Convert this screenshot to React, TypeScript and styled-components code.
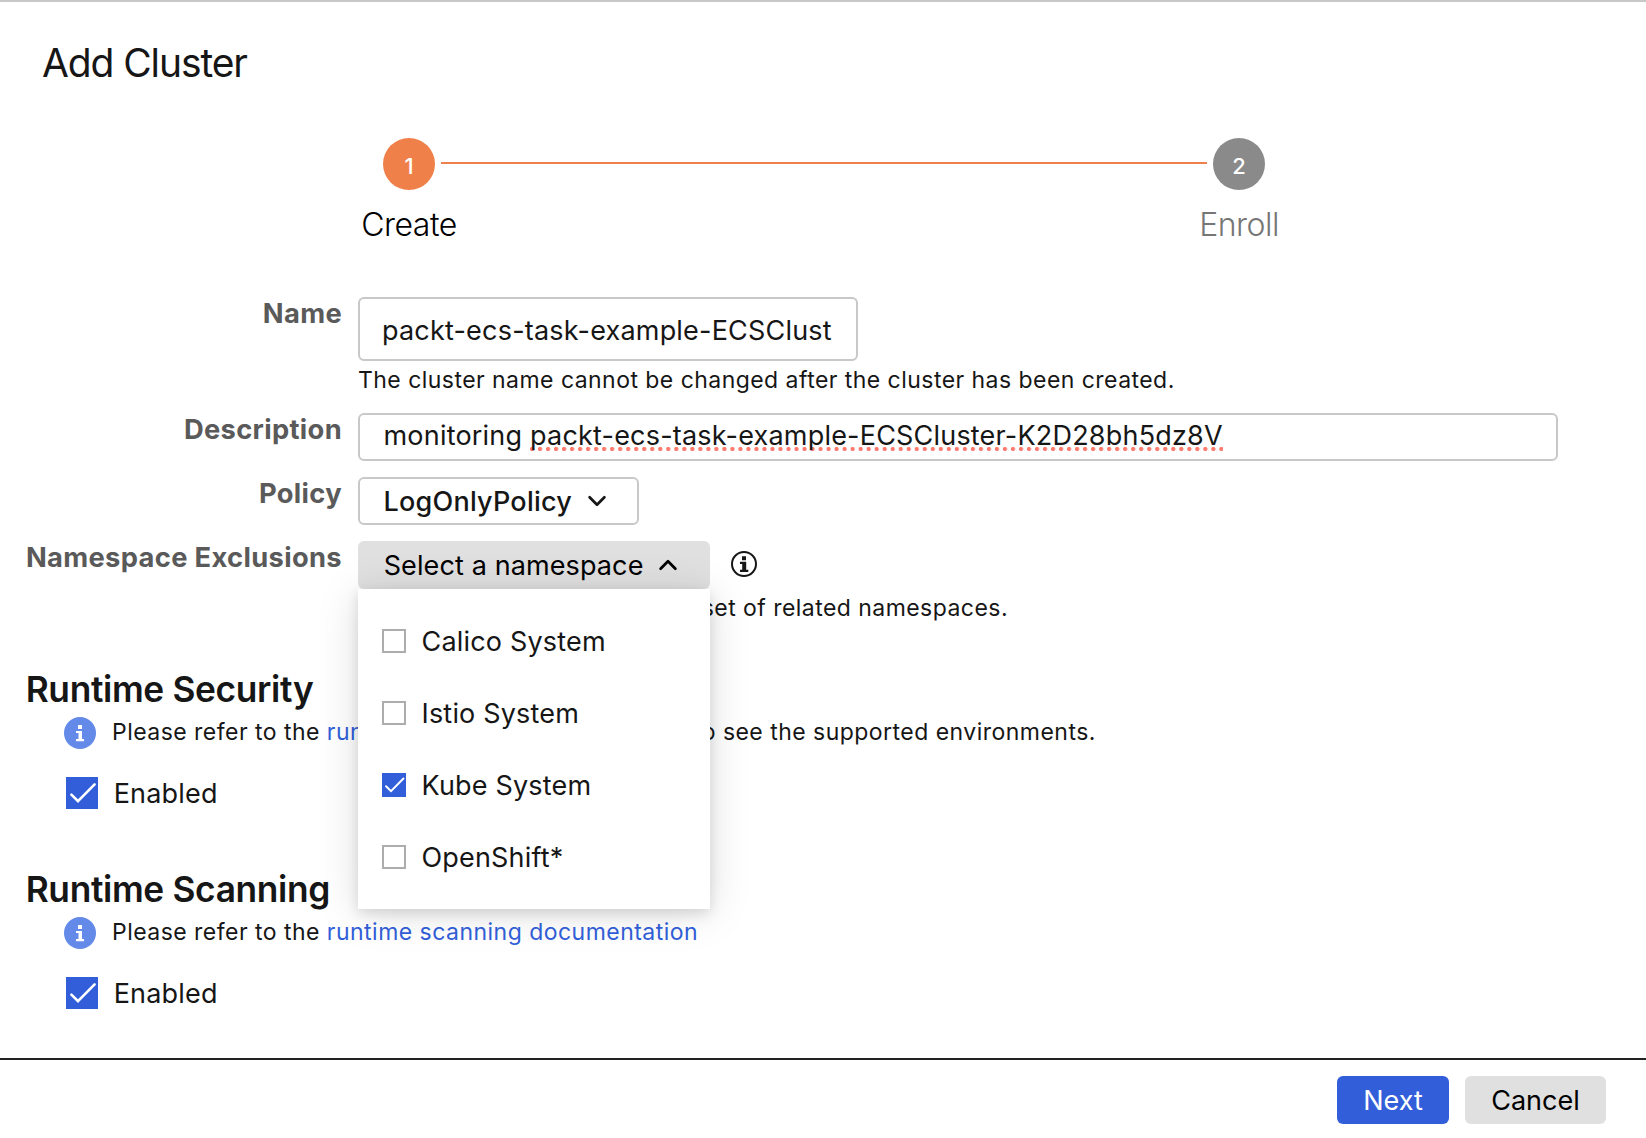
import React, { useState } from "react";
import styled, { createGlobalStyle } from "styled-components";

const color = {
  text: "#161616",
  muted: "#767676",
  label: "#5a5a5a",
  border: "#c8c8c8",
  accent: "#f0804a",
  step: "#8a8a8a",
  blue: "#325fd9",
  info: "#638ae8",
  grey: "#e0e0e0",
};

const GlobalStyle = createGlobalStyle`
  *, *::before, *::after { box-sizing: border-box; }
  body {
    margin: 0;
    background: #fff;
    color: ${color.text};
    font-family: Inter, "Liberation Sans", sans-serif;
    font-size: 27px;
    font-weight: 430;
    letter-spacing: 0.2px;
    line-height: 32px;
  }
`;

const Page = styled.main`
  display: flex;
  flex-direction: column;
  height: 1138px;
  overflow: hidden;
  border-top: 2px solid ${color.border};
`;

const Title = styled.h1`
  margin: 37px 0 0 42px;
  font-size: 39px;
  font-weight: 430;
  line-height: 48px;
  letter-spacing: -1.1px;
`;

const Stepper = styled.div`
  display: flex;
  align-items: flex-start;
  width: 882px;
  margin: 51px 0 0 383px;
`;

const Step = styled.div`
  display: flex;
  flex-direction: column;
  align-items: center;
  width: 52px;
`;

const StepCircle = styled.div<{ $active?: boolean }>`
  display: flex;
  align-items: center;
  justify-content: center;
  width: 52px;
  height: 52px;
  padding-top: 3px;
  border-radius: 50%;
  background: ${(p) => (p.$active ? color.accent : color.step)};
  color: #fff;
  font-size: 22px;
  font-weight: 500;
  letter-spacing: 0;
`;

const StepLabel = styled.div<{ $active?: boolean }>`
  margin-top: 15px;
  color: ${(p) => (p.$active ? "#000" : color.muted)};
  font-size: 32px;
  font-weight: 340;
  line-height: 40px;
  letter-spacing: -0.5px;
  white-space: nowrap;
`;

const StepLine = styled.div`
  flex: 1;
  height: 2px;
  margin: 24px 6px 0;
  background: ${color.accent};
`;

const Form = styled.div`
  display: flex;
  flex-direction: column;
  gap: 16px;
  margin-top: 52px;
`;

const Row = styled.div`
  display: grid;
  grid-template-columns: 342px 1200px;
  column-gap: 16px;
`;

const Label = styled.label`
  padding-top: 1px;
  color: ${color.label};
  font-size: 27.3px;
  font-weight: 700;
  letter-spacing: 0.34px;
  text-align: right;
  white-space: nowrap;
`;

const Box = styled.div<{ $w: number; $h: number; $pad: string }>`
  display: flex;
  align-items: center;
  width: ${(p) => p.$w}px;
  height: ${(p) => p.$h}px;
  padding: ${(p) => p.$pad};
  border: 2px solid ${color.border};
  border-radius: 6px;
  white-space: pre;
`;

const Misspelled = styled.span`
  height: 32px;
  background: radial-gradient(circle at 2px 2px, #ff7a6e 1.8px, transparent 2.4px) 0 27px / 8.02px 4px repeat-x;
`;

const Helper = styled.div<{ $w?: number }>`
  width: ${(p) => (p.$w ? p.$w + "px" : "auto")};
  height: 36px;
  padding-top: 5px;
  font-size: 23px;
  line-height: 28px;
  letter-spacing: 0.455px;
  text-align: ${(p) => (p.$w ? "right" : "left")};
  white-space: nowrap;
`;

const Selected = styled.span`
  margin-right: 15px;
  padding-top: 1px;
  font-weight: 550;
  letter-spacing: 0.23px;
`;

const SelectLine = styled.div`
  display: flex;
  align-items: center;
  gap: 21px;
  height: 48px;
`;

const SelectWrap = styled.div`
  position: relative;
  width: 352px;
`;

const SelectButton = styled.button`
  display: flex;
  align-items: center;
  gap: 14px;
  width: 100%;
  height: 48px;
  padding: 1px 0 0 25.7px;
  border: 0;
  border-radius: 6px;
  background: ${color.grey};
  color: #000;
  font: inherit;
  letter-spacing: 0.11px;

  svg {
    margin-bottom: 2px;
  }
`;

const Menu = styled.div`
  position: absolute;
  z-index: 2;
  top: 48px;
  left: 0;
  display: flex;
  flex-direction: column;
  width: 352px;
  height: 320px;
  padding: 16px 24px;
  background: #fff;
  box-shadow: 0 4px 12px rgba(0, 0, 0, 0.12), 0 4px 40px rgba(0, 0, 0, 0.13);
`;

const Option = styled.div`
  display: flex;
  align-items: center;
  gap: 15.5px;
  height: 72px;
`;

const CheckLabel = styled.span`
  padding-top: 1px;
  letter-spacing: 0.18px;
`;

const CheckBox = styled.span<{ $size: number; $on: boolean }>`
  display: flex;
  flex: none;
  width: ${(p) => p.$size}px;
  height: ${(p) => p.$size}px;
  border: ${(p) => (p.$on ? "0" : "2px solid #adadad")};
  background: ${(p) => (p.$on ? color.blue : "#fff")};
`;

const Section = styled.section<{ $top: number }>`
  display: flex;
  flex-direction: column;
  margin-top: ${(p) => p.$top}px;
`;

const SectionTitle = styled.h2`
  margin: 1px 0 5px 25.7px;
  font-size: 35.3px;
  font-weight: 630;
  line-height: 44px;
  letter-spacing: -0.34px;
`;

const Note = styled.div`
  display: flex;
  align-items: center;
  gap: 16px;
  height: 32px;
  padding-left: 64px;
`;

const NoteText = styled.p`
  margin: 0 0 3px;
  font-size: 23px;
  line-height: 28px;
  letter-spacing: 0.47px;
  white-space: nowrap;
`;

const Link = styled.a`
  color: ${color.blue};
`;

const Enabled = styled.div`
  display: flex;
  align-items: center;
  gap: 15.7px;
  height: 32px;
  margin: 28px 0 0 66px;
`;

const Footer = styled.footer`
  display: flex;
  justify-content: flex-end;
  gap: 16px;
  height: 80px;
  margin-top: auto;
  padding: 16px 40px 0 0;
  border-top: 2px solid #222;
`;

const Button = styled.button<{ $primary?: boolean; $w: number }>`
  width: ${(p) => p.$w}px;
  height: 48px;
  padding: 1px 0 0;
  border: 0;
  border-radius: 6px;
  background: ${(p) => (p.$primary ? color.blue : color.grey)};
  color: ${(p) => (p.$primary ? "#fff" : "#000")};
  font: inherit;
  letter-spacing: 0;
`;

const Chevron = ({ up }: { up?: boolean }) => (
  <svg width="20" height="14" viewBox="0 0 20 14" fill="none" stroke="currentColor" strokeWidth="2.7" strokeLinecap="round" strokeLinejoin="round">
    <path d={up ? "M2.6 10.8 10 3.2l7.4 7.6" : "M2.6 3.2 10 10.8l7.4-7.6"} />
  </svg>
);

const InfoFilled = () => (
  <svg width="32" height="32" viewBox="0 0 32 32">
    <circle cx="16" cy="16" r="16" fill={color.info} />
    <path fill="#fff" d="M14 8h4v4h-4zM12 14h6v8h2v2.3h-8V22h2.5v-6H12z" />
  </svg>
);

const OutlineIcon = styled.svg`
  margin-bottom: 2px;
`;

const InfoOutline = () => (
  <OutlineIcon width="26" height="26" viewBox="0 0 26 26">
    <circle cx="13" cy="13" r="12" fill="none" stroke={color.text} strokeWidth="2" />
    <path fill={color.text} d="M11 5.2h4v4h-4zM9 10.8h6.2v8h2.1v2.3H9v-2.3h2.2v-5.7H9z" />
  </OutlineIcon>
);

const Check = ({ size, on }: { size: number; on: boolean }) => (
  <CheckBox $size={size} $on={on}>
    {on && (
      <svg width={size} height={size} viewBox="0 0 32 32" fill="none" stroke="#fff" strokeWidth="2.6" strokeLinecap="round">
        <path d="M5.4 17.6 12 24.2 28.6 7.4" />
      </svg>
    )}
  </CheckBox>
);

export default function App() {
  const [options, setOptions] = useState([
    { name: "Calico System", on: false },
    { name: "Istio System", on: false },
    { name: "Kube System", on: true },
    { name: "OpenShift*", on: false },
  ]);
  const toggle = (name: string) =>
    setOptions((list) => list.map((o) => (o.name === name ? { ...o, on: !o.on } : o)));

  return (
    <Page>
      <GlobalStyle />
      <Title>Add Cluster</Title>
      <Stepper>
        <Step>
          <StepCircle $active>1</StepCircle>
          <StepLabel $active>Create</StepLabel>
        </Step>
        <StepLine />
        <Step>
          <StepCircle>2</StepCircle>
          <StepLabel>Enroll</StepLabel>
        </Step>
      </Stepper>

      <Form>
        <Row>
          <Label>Name</Label>
          <div>
            <Box $w={500} $h={64} $pad="3px 21px 0 22px">packt-ecs-task-example-ECSClust</Box>
            <Helper>The cluster name cannot be changed after the cluster has been created.</Helper>
          </div>
        </Row>
        <Row>
          <Label>Description</Label>
          <Box $w={1200} $h={48} $pad="0 22px 2px 23.5px">
            monitoring <Misspelled>packt-ecs-task-example-ECSCluster-K2D28bh5dz8V</Misspelled>
          </Box>
        </Row>
        <Row>
          <Label>Policy</Label>
          <Box $w={281} $h={48} $pad="0 22px 0 23.5px">
            <Selected>LogOnlyPolicy</Selected>
            <Chevron />
          </Box>
        </Row>
        <Row>
          <Label>Namespace Exclusions</Label>
          <div>
            <SelectLine>
              <SelectWrap>
                <SelectButton>
                  Select a namespace
                  <Chevron up />
                </SelectButton>
                <Menu>
                  {options.map((o) => (
                    <Option key={o.name} onClick={() => toggle(o.name)}>
                      <Check size={24} on={o.on} />
                      <CheckLabel>{o.name}</CheckLabel>
                    </Option>
                  ))}
                </Menu>
              </SelectWrap>
              <InfoOutline />
            </SelectLine>
            <Helper $w={650}>Each selection represents a set of related namespaces.</Helper>
          </div>
        </Row>
      </Form>

      <Section $top={42}>
        <SectionTitle>Runtime Security</SectionTitle>
        <Note>
          <InfoFilled />
          <NoteText>
            Please refer to the <Link>runtime security documentation</Link> to see the supported environments.
          </NoteText>
        </Note>
        <Enabled>
          <Check size={32} on />
          <CheckLabel>Enabled</CheckLabel>
        </Enabled>
      </Section>
      <Section $top={58}>
        <SectionTitle>Runtime Scanning</SectionTitle>
        <Note>
          <InfoFilled />
          <NoteText>
            Please refer to the <Link>runtime scanning documentation</Link>
          </NoteText>
        </Note>
        <Enabled>
          <Check size={32} on />
          <CheckLabel>Enabled</CheckLabel>
        </Enabled>
      </Section>

      <Footer>
        <Button $primary $w={112}>Next</Button>
        <Button $w={141}>Cancel</Button>
      </Footer>
    </Page>
  );
}
